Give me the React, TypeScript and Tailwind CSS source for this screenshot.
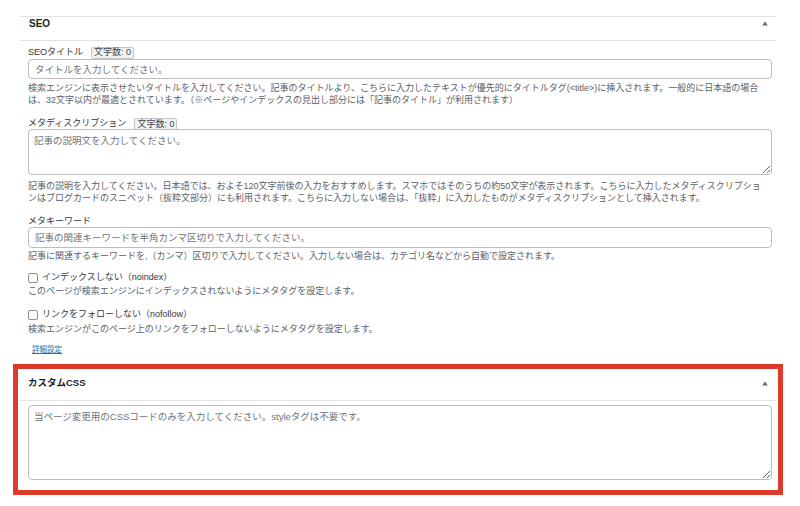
import React from "react";

const font = "font-['Liberation_Sans','Noto_Sans_CJK_JP',sans-serif]";

const Caret = () => (
  <svg width="6" height="5" viewBox="0 0 6 5" className="block">
    <path d="M3 0.5 L5.8 4.5 L0.2 4.5 Z" fill="#6b6b6b" />
  </svg>
);

const Badge = ({ children }: { children: React.ReactNode }) => (
  <span className="ml-[8px] inline-flex h-[12px] items-center rounded-[2px] border border-[#c6c6c6] bg-[#f2f2f2] px-[2px] text-[9px] leading-none text-[#3c434a]">
    {children}
  </span>
);

const Checkbox = () => (
  <span className="inline-block h-[10px] w-[10px] shrink-0 rounded-[2px] border border-[#8c8f94] bg-white" />
);

export default function App() {
  return (
    <div className={`${font} min-h-[506px] w-[800px] bg-white text-[#3c434a]`}>
      {/* SEO metabox */}
      <div className="pt-[16px] pl-[20px] pr-[24px]">
        <div className="border-t border-[#e2e2e2]">
          <div className="flex h-[24px] items-center justify-between border-b border-[#e2e2e2] pb-[10px] pl-[9px] pr-[8px]">
            <span className="text-[10px] font-bold text-[#1d2327]">SEO</span>
            <Caret />
          </div>

          <div className="flex flex-col pl-[8px] pr-[4px]">
            <div className="mt-[4px] flex h-[14px] items-center pt-[1px] text-[9px] text-[#32373c]">
              SEOタイトル
              <Badge>文字数: 0</Badge>
            </div>
            <input
              className="h-[20px] w-full rounded-[4px] border border-[#bdbdbd] bg-white px-[6px] text-[9.5px] outline-none placeholder:text-[#6f7378]"
              placeholder="タイトルを入力してください。"
            />
            <p className="mt-[3px] whitespace-nowrap text-[9px] leading-[12px] text-[#5c6166]">
              検索エンジンに表示させたいタイトルを入力してください。記事のタイトルより、こちらに入力したテキストが優先的にタイトルタグ(&lt;title&gt;)に挿入されます。一般的に日本語の場合
              <br />
              は、32文字以内が最適とされています。（※ページやインデックスの見出し部分には「記事のタイトル」が利用されます）
            </p>

            <div className="mt-[10px] flex h-[13px] items-center pt-[3px] text-[9px] text-[#32373c]">
              メタディスクリプション
              <Badge>文字数: 0</Badge>
            </div>
            <textarea
              className="h-[46px] w-full rounded-[4px] border border-[#bdbdbd] bg-white px-[5px] py-[4px] text-[9.5px] leading-[13px] outline-none placeholder:text-[#6f7378]"
              placeholder="記事の説明文を入力してください。"
            />
            <p className="mt-[5px] whitespace-nowrap text-[9px] leading-[12px] text-[#5c6166]">
              記事の説明を入力してください。日本語では、およそ120文字前後の入力をおすすめします。スマホではそのうちの約50文字が表示されます。こちらに入力したメタディスクリプショ
              <br />
              ンはブログカードのスニペット（抜粋文部分）にも利用されます。こちらに入力しない場合は、「抜粋」に入力したものがメタディスクリプションとして挿入されます。
            </p>

            <div className="mt-[10px] flex h-[13px] items-center pt-[3px] text-[9px] text-[#32373c]">メタキーワード</div>
            <input
              className="h-[21px] w-full rounded-[4px] border border-[#bdbdbd] bg-white px-[6px] text-[9.5px] outline-none placeholder:text-[#6f7378]"
              placeholder="記事の関連キーワードを半角カンマ区切りで入力してください。"
            />
            <p className="mt-[2px] whitespace-nowrap text-[9px] leading-[12px] text-[#5c6166]">
              記事に関連するキーワードを,（カンマ）区切りで入力してください。入力しない場合は、カテゴリ名などから自動で設定されます。
            </p>

            <label className="mt-[8px] flex h-[15px] items-center gap-[4px] text-[9px] text-[#32373c]">
              <Checkbox />
              インデックスしない（noindex）
            </label>
            <p className="whitespace-nowrap text-[9px] leading-[12px] text-[#5c6166]">
              このページが検索エンジンにインデックスされないようにメタタグを設定します。
            </p>

            <label className="mt-[10px] flex h-[15px] items-center gap-[4px] text-[9px] text-[#32373c]">
              <Checkbox />
              リンクをフォローしない（nofollow）
            </label>
            <p className="mt-[1px] whitespace-nowrap text-[9px] leading-[12px] text-[#5c6166]">
              検索エンジンがこのページ上のリンクをフォローしないようにメタタグを設定します。
            </p>

            <a className="mt-[9px] ml-[4px] w-fit text-[7.5px] leading-[12px] text-[#2271b1] underline">詳細設定</a>
          </div>
        </div>
      </div>

      {/* Custom CSS metabox, highlighted */}
      <div className="mt-[8px] ml-[13px] mr-[17px] border-[5px] border-[#dc3b2c] px-[2px]">
        <div className="flex h-[32px] items-center justify-between border-b border-[#e2e2e2] pb-[3px] pl-[8px] pr-[8px]">
          <span className="text-[9.5px] font-bold text-[#1d2327]">カスタムCSS</span>
          <Caret />
        </div>
        <div className="pl-[8px] pr-[4px] pt-[4px] pb-[10px]">
          <textarea
            className="block h-[75px] w-full rounded-[4px] border border-[#bdbdbd] bg-white px-[5px] py-[4px] text-[9.5px] leading-[13px] outline-none placeholder:text-[#6f7378]"
            placeholder="当ページ変更用のCSSコードのみを入力してください。styleタグは不要です。"
          />
        </div>
      </div>
    </div>
  );
}
